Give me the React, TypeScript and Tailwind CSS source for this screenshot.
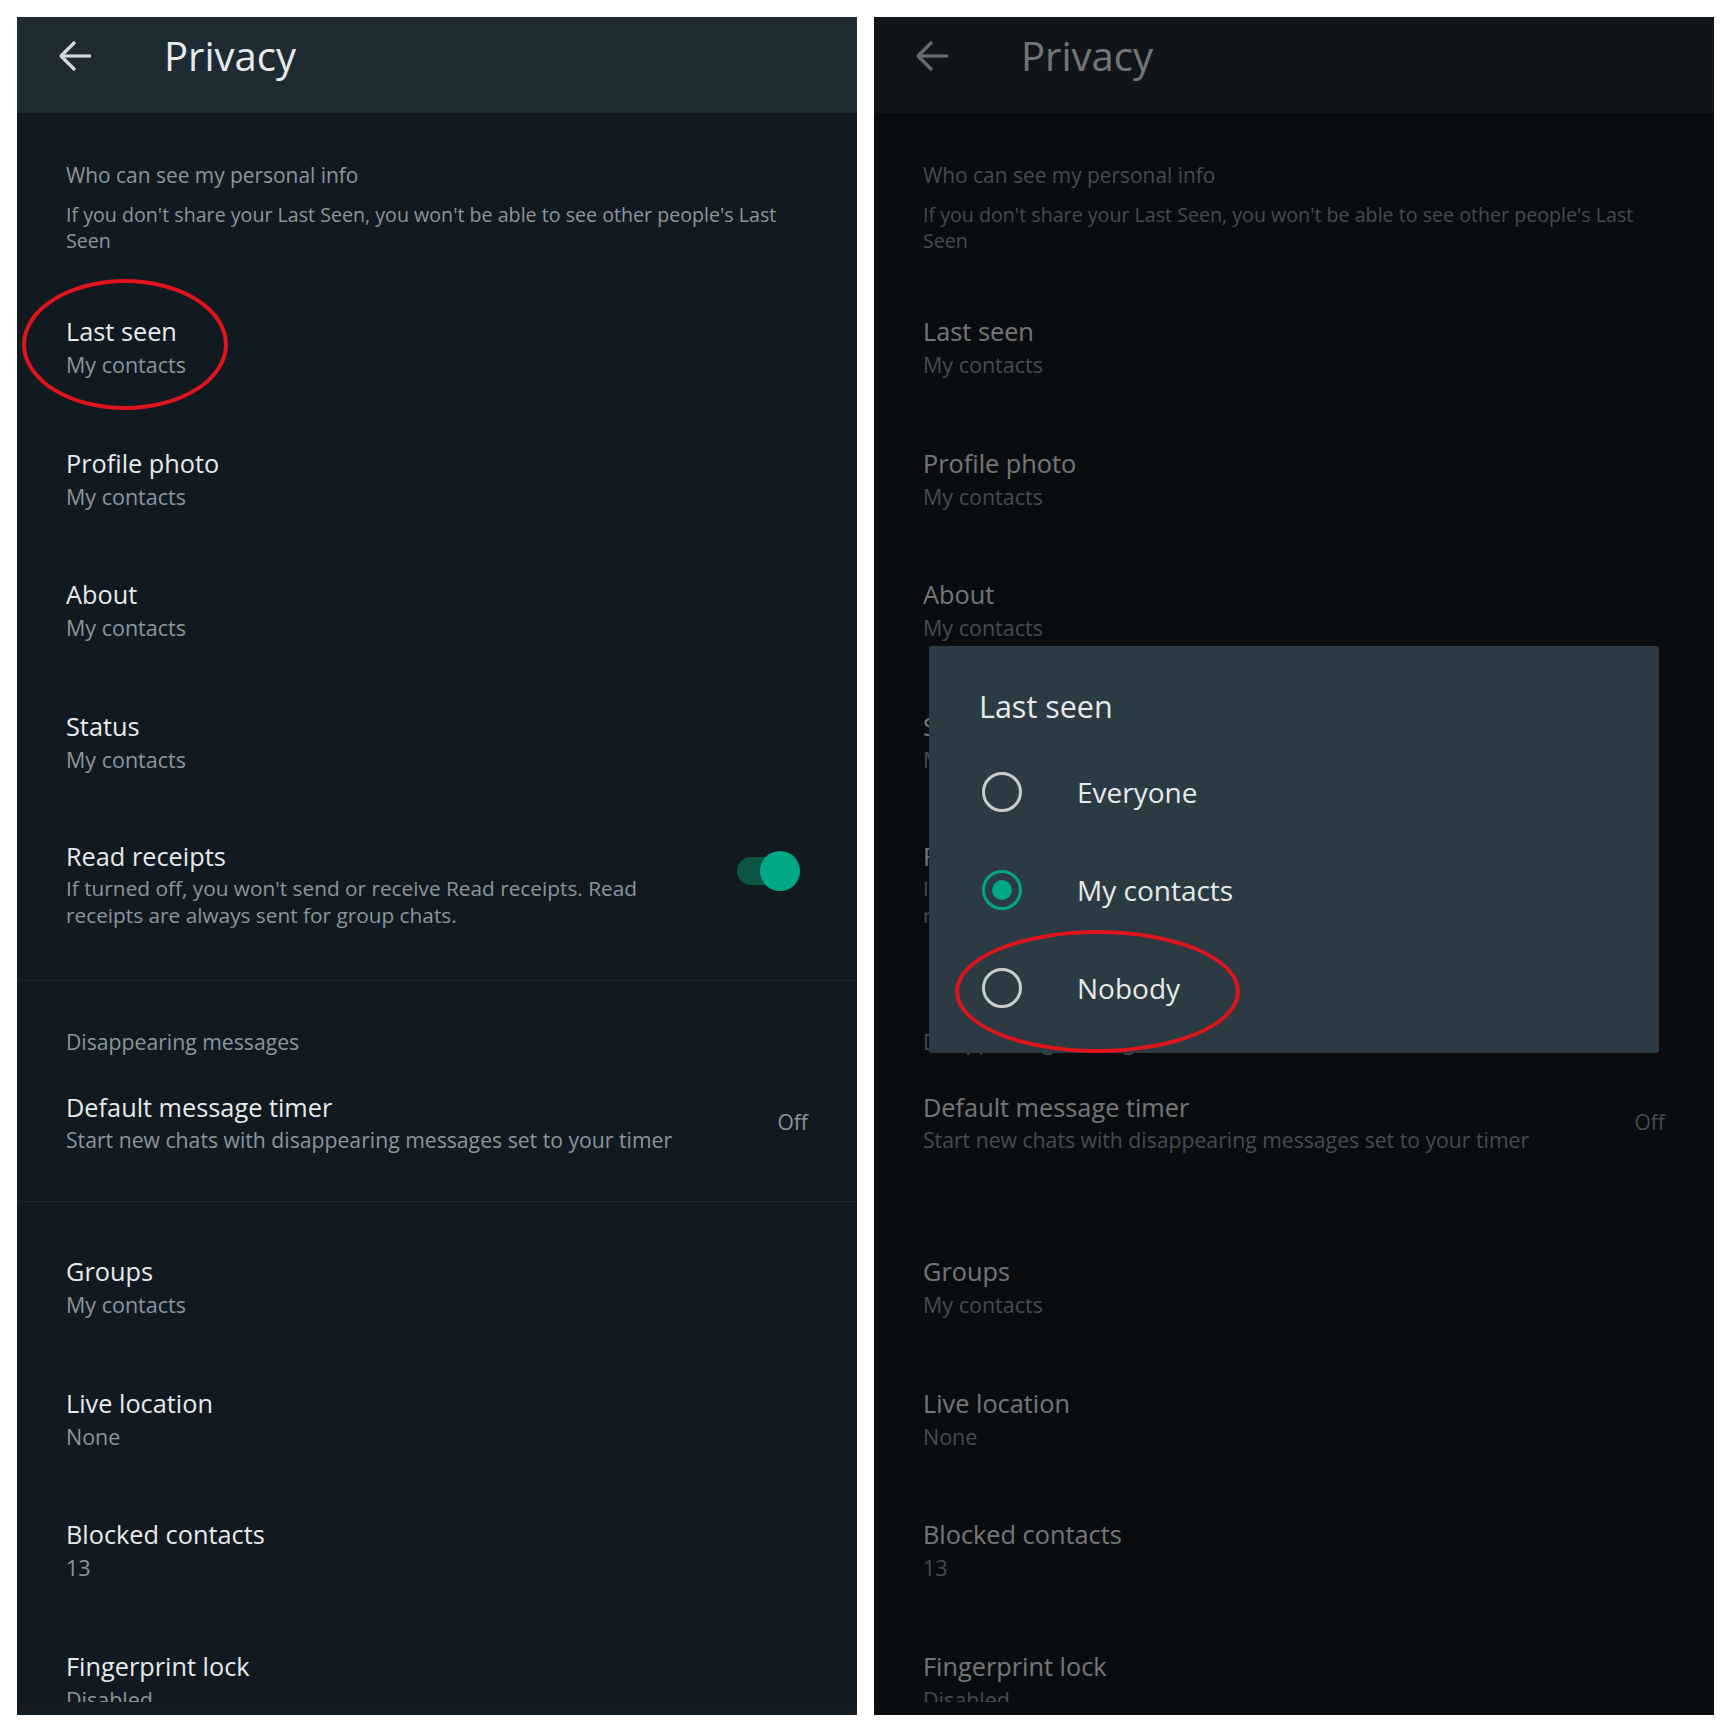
import React from "react";

type Item = { title: string; sub: string };

const topItems: Item[] = [
  { title: "Last seen", sub: "My contacts" },
  { title: "Profile photo", sub: "My contacts" },
  { title: "About", sub: "My contacts" },
  { title: "Status", sub: "My contacts" },
];

const bottomItems: Item[] = [
  { title: "Groups", sub: "My contacts" },
  { title: "Live location", sub: "None" },
  { title: "Blocked contacts", sub: "13" },
  { title: "Fingerprint lock", sub: "Disabled" },
];

const options = [
  { label: "Everyone", checked: false },
  { label: "My contacts", checked: true },
  { label: "Nobody", checked: false },
];

const BackArrow = () => (
  <svg width="34" height="32" viewBox="0 0 34 32" fill="none" stroke="#d3d8db" strokeWidth="3.2" strokeLinejoin="round">
    <path d="M33 16H3" />
    <path d="M17 2 3 16l14 14" />
  </svg>
);

const Row = ({ item }: { item: Item }) => (
  <div className="h-[131.5px] px-[49px] pt-[34px]">
    <p className="text-[25.3px] leading-[30px] text-[#e6eaec]">{item.title}</p>
    <p className="mt-[5px] text-[21.5px] leading-[27px] text-[#8a969e]">{item.sub}</p>
  </div>
);

const Toggle = () => (
  <div className="relative h-[40px] w-[63px] shrink-0">
    <div className="absolute left-0 top-[6px] h-[28px] w-[48px] rounded-full bg-[#0c5444]" />
    <div className="absolute right-0 top-0 h-[40px] w-[40px] rounded-full bg-[#00a884]" />
  </div>
);

const PrivacyScreen = () => (
  <div className="flex h-full flex-col">
    <header className="flex h-[96px] shrink-0 items-start bg-[#1f2b33] pl-[41px]">
      <div className="mt-[23px]">
        <BackArrow />
      </div>
      <h1 className="ml-[72px] mt-[15px] text-[40px] leading-[48px] text-[#e6eaec]">Privacy</h1>
    </header>

    <div className="flex-1 overflow-hidden bg-[#121a21]">
      <div className="px-[49px] pt-[49px]">
        <p className="text-[20.9px] leading-[26px] text-[#8a969e]">Who can see my personal info</p>
        <p className="mt-[14px] whitespace-nowrap text-[19.65px] leading-[26px] text-[#8a969e]">
          If you don't share your Last Seen, you won't be able to see other people's Last
          <br />
          Seen
        </p>
      </div>

      <div className="mt-[28px]">
        {topItems.map((item) => (
          <Row key={item.title} item={item} />
        ))}
      </div>

      <div className="flex h-[172px] items-start justify-between pl-[49px] pr-[57px] pt-[33px]">
        <div>
          <p className="text-[25.3px] leading-[30px] text-[#e6eaec]">Read receipts</p>
          <p className="mt-[4px] whitespace-nowrap text-[20.8px] leading-[27px] text-[#8a969e]">
            If turned off, you won't send or receive Read receipts. Read
            <br />
            receipts are always sent for group chats.
          </p>
        </div>
        <div className="mt-[10px]">
          <Toggle />
        </div>
      </div>

      <div className="h-px bg-[#1c252c]" />

      <div className="px-[49px] pt-[48px]">
        <p className="text-[21.2px] leading-[26px] text-[#8a969e]">Disappearing messages</p>
        <div className="mt-[37px] flex items-center justify-between">
          <div>
            <p className="text-[25.3px] leading-[30px] text-[#e6eaec]">Default message timer</p>
            <p className="mt-[4px] text-[21.2px] leading-[27px] text-[#8a969e]">
              Start new chats with disappearing messages set to your timer
            </p>
          </div>
          <span className="text-[21px] text-[#8a969e]">Off</span>
        </div>
      </div>

      <div className="mt-[48px] h-px bg-[#1c252c]" />

      <div className="mt-[20px]">
        {bottomItems.map((item) => (
          <Row key={item.title} item={item} />
        ))}
      </div>
    </div>

    <div className="h-[13px] shrink-0 bg-[#151c21]" />
  </div>
);

const Radio = ({ checked }: { checked: boolean }) => (
  <div
    className={
      checked
        ? "flex h-[40px] w-[40px] items-center justify-center rounded-full border-[3px] border-[#00a884]"
        : "h-[40px] w-[40px] rounded-full border-[3px] border-[#c9cdd0]"
    }
  >
    {checked && <div className="h-[20px] w-[20px] rounded-full bg-[#00a884]" />}
  </div>
);

const LastSeenDialog = () => (
  <div className="absolute left-[55px] right-[55px] top-[629px] h-[407px] rounded-[3px] bg-[#2b3a43] pb-[16px]">
    <p className="pl-[50px] pt-[42px] text-[30.5px] leading-[36px] text-[#e6eaec]">Last seen</p>
    <div className="mt-[19px]">
      {options.map((o) => (
        <div key={o.label} className="flex h-[98px] items-center pl-[53px]">
          <Radio checked={o.checked} />
          <span className="ml-[55px] text-[28px] text-[#e6eaec]">{o.label}</span>
        </div>
      ))}
    </div>
  </div>
);

export default function App() {
  return (
    <div className="flex h-[1732px] w-[1732px] gap-[17px] bg-white p-[17px] font-['Open_Sans',sans-serif]">
      <div className="relative h-[1698px] w-[840px] overflow-hidden">
        <PrivacyScreen />
        <div className="absolute left-[5px] top-[262px] h-[131px] w-[206px] rounded-[50%] border-[4px] border-[#e0141d]" />
      </div>

      <div className="relative h-[1698px] w-[840px] overflow-hidden">
        <PrivacyScreen />
        <div className="absolute inset-0 bg-black/50" />
        <LastSeenDialog />
        <div className="absolute left-[81px] top-[913px] h-[123px] w-[285px] rounded-[50%] border-[4px] border-[#e0141d]" />
      </div>
    </div>
  );
}
